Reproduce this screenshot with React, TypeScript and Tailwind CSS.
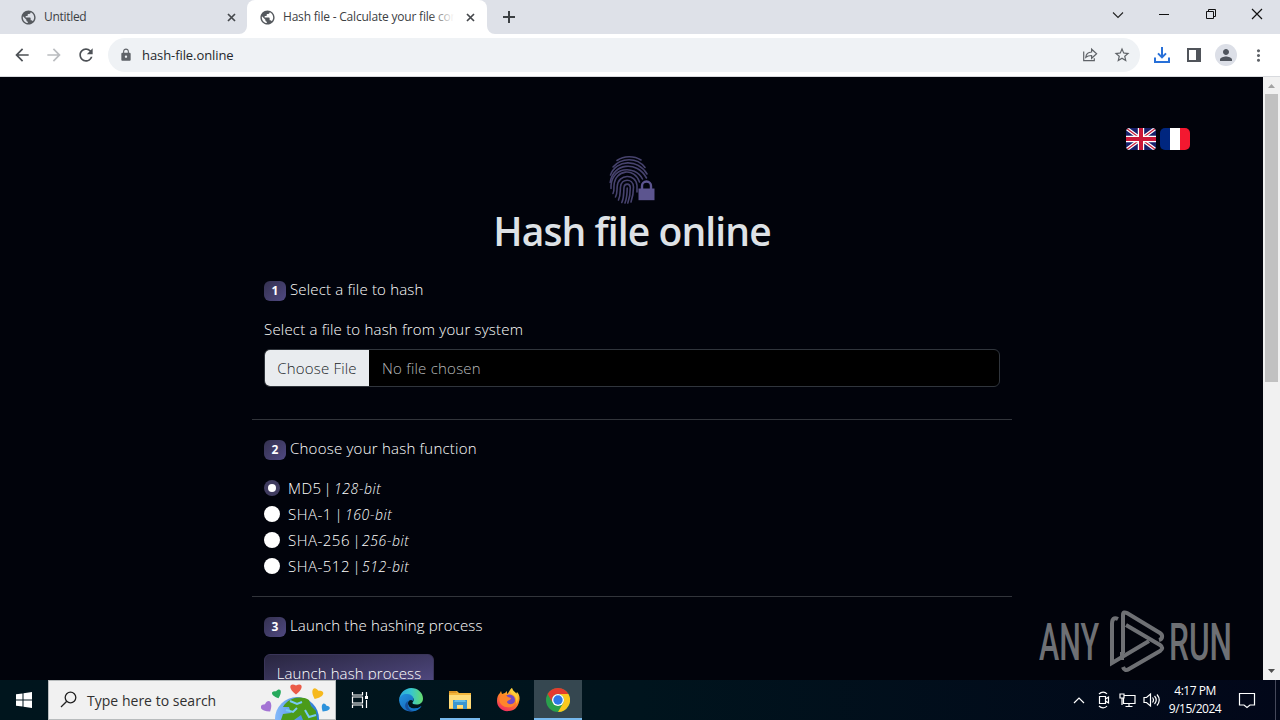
import type { ReactNode } from "react";
import {
  MdArrowBack,
  MdArrowForward,
  MdLock,
  MdMoreVert,
  MdPerson,
  MdPublic,
  MdRefresh,
  MdStarBorder,
} from "react-icons/md";

const HASHES = [
  { name: "MD5", bits: "128-bit", nameCls: "w-[33px]", bar: "w-[13px]" },
  { name: "SHA-1", bits: "160-bit", nameCls: "w-[44px]", bar: "w-[13px]" },
  { name: "SHA-256", bits: "256-bit", nameCls: "w-[63px]", bar: "w-[11px]" },
  { name: "SHA-512", bits: "512-bit", nameCls: "w-[63px]", bar: "w-[11px]" },
];

function TabClose() {
  return (
    <svg width="9" height="9" className="shrink-0">
      <path d="m1 1 7 7M8 1 1 8" stroke="#45484c" strokeWidth="1.7" />
    </svg>
  );
}

function TabStrip() {
  return (
    <div className="flex h-[34px] shrink-0 bg-[#dee1e8] text-[12px] text-[#3c4043]">
      <div className="flex w-[247px] items-center pr-[11px] pl-5">
        <MdPublic size={17} className="text-[#55595e]" />
        <span className="ml-[7px] flex-1 tracking-[-0.3px]">Untitled</span>
        <TabClose />
      </div>
      <div className="relative flex w-60 items-center rounded-t-lg bg-white pl-3">
        <svg className="absolute bottom-0 -left-2" width="8" height="8"><path d="M8 0v8H0a8 8 0 0 0 8-8" fill="#fff" /></svg>
        <svg className="absolute -right-2 bottom-0" width="8" height="8"><path d="M0 0v8h8a8 8 0 0 1-8-8" fill="#fff" /></svg>
        <MdPublic size={17} className="shrink-0 text-[#55595e]" />
        <div className="relative mr-[12px] ml-[7px] w-[171px] overflow-hidden whitespace-nowrap tracking-[-0.2px]">
          Hash file - Calculate your file con
          <div className="absolute inset-y-0 right-0 w-6 bg-gradient-to-r from-transparent to-white" />
        </div>
        <TabClose />
      </div>
      <div className="flex flex-1 items-center pl-[15px]">
        <svg width="14" height="14"><path d="M7 1v12M1 7h12" stroke="#3c4043" strokeWidth="2" /></svg>
      </div>
      <div className="flex items-center pr-[17px]">
        <svg width="12" height="12" className="mr-[35px] mb-[5px]"><path d="m1 3.500 5 5 5-5" fill="none" stroke="#222" strokeWidth="1.100" /></svg>
        <svg width="11" height="12" className="mr-[35px] mb-[6px]"><path d="M0 6.500h10" stroke="#111" /></svg>
        <svg width="12" height="12" className="mr-[34px] mb-[6px]">
          <path d="M1.500 3.500h7v7h-7zM3.500 3.500v-2h7v7h-2" fill="none" stroke="#111" />
        </svg>
        <svg width="12" height="12" className="mb-[6px]"><path d="m1 1 10 10M11 1 1 11" stroke="#111" strokeWidth="1.200" /></svg>
      </div>
    </div>
  );
}

function Toolbar() {
  return (
    <div className="flex h-[43px] shrink-0 items-center border-b border-[#d8dade] bg-white text-[#5f6368]">
      <MdArrowBack size={20} className="ml-3 text-[#4d5156]" />
      <MdArrowForward size={20} className="ml-3 text-[#bbbdc0]" />
      <MdRefresh size={20} className="ml-3 text-[#4d5156]" />
      <div className="ml-3 flex h-[34px] w-[1032px] items-center rounded-full bg-[#eff2f5] pr-[9px] pl-[11px]">
        <MdLock size={14} />
        <span className="mt-px ml-[9px] flex-1 text-[13px] tracking-[-0.08px] text-[#25282c]">hash-file.online</span>
        <svg width="16" height="16" fill="none" stroke="currentColor" strokeWidth="1.200" className="mr-[15px]">
          <path d="M1.700 4.500v9.200h10.600v-2.500M3.800 10.200c.4-3.600 2.500-5 5.800-5.200V2.200l5 4.600-5 4.500V8.500c-2.500 0-4.300.4-5.800 1.700Z" />
        </svg>
        <MdStarBorder size={18} />
      </div>
      <svg width="18" height="18" className="ml-[13px]" fill="none" stroke="#2870d8" strokeWidth="2">
        <path d="M9 1v10M5 7.400 9 11.400 13 7.400M2 11.500V16h14v-4.500" />
      </svg>
      <svg width="14" height="14" className="ml-4"><path d="M1 1h12v12H1z" fill="none" stroke="#50545a" strokeWidth="2" /><path d="M9 1h4v12H9z" fill="#50545a" /></svg>
      <div className="ml-[14px] flex size-[22px] items-center justify-center rounded-full bg-[#dcdfe7]">
        <MdPerson size={18} className="text-[#50555e]" />
      </div>
      <MdMoreVert size={19} className="ml-[12px]" />
    </div>
  );
}

function Fingerprint() {
  return (
    <svg width="48" height="52" className="mx-auto mt-1" fill="none" stroke="#47436e" strokeWidth="1.600" strokeLinecap="round">
      <path d="M9 6.500C16 1.500 26 1.500 33 6" />
      <path d="M5 13C13 3.500 29 3 37 13.500" />
      <path d="M2.500 21C8 5.500 30 4.500 39 20" />
      <path d="M2.200 28.500C5 9 29 6.500 38.500 24" />
      <path d="M3 34.500C2 12.500 27 10.500 34.500 25" />
      <path d="M5 39.500c1.500-3 .7-5 1-8C7 15 27 13.500 31.500 28" />
      <path d="M7.500 43c2-4 1.300-7 1.700-10.500C10 19.500 28 19 29 31.500v6.500" />
      <path d="M10.500 46c2.300-5 1.500-9 2-13 .8-9 12.500-9 13 0 0 6-.8 10-2.500 15" />
      <path d="M13.800 48.500c2.500-5.500 1.700-10 2.200-15 .4-4.500 6-4.500 6.300 0 .1 6-.8 11-2.500 15.500" />
      <path d="M19.200 34c0 5-.4 10-2.200 15" />
      <path d="M34 35v-3a4.500 4.500 0 0 1 9 0v3" stroke="#5c558f" strokeWidth="2.400" />
      <path d="M30.500 34.500h16v11.700h-16z" fill="#5c558f" stroke="none" />
    </svg>
  );
}

function Flags() {
  return (
    <div className="flex justify-end gap-1 pt-[51px] pr-[73px]">
      <svg width="30" height="22" viewBox="0 0 30 22" className="rounded-[4px]">
        <path d="M0 0h30v22H0z" fill="#17206b" />
        <path d="m0 0 30 22M30 0 0 22" stroke="#fff" strokeWidth="3.600" />
        <path d="m0 0 30 22M30 0 0 22" stroke="#c91f3c" strokeWidth="1.300" />
        <path d="M15 0v22M0 11h30" stroke="#fff" strokeWidth="6.400" />
        <path d="M15 0v22M0 11h30" stroke="#cb1838" strokeWidth="4" />
      </svg>
      <svg width="30" height="22" className="rounded-[5px]">
        <path d="M0 0h10v22H0z" fill="#00267f" />
        <path d="M10 0h10v22H10z" fill="#fff" />
        <path d="M20 0h10v22H20z" fill="#f31830" />
      </svg>
    </div>
  );
}

function Step({ n, children }: { n: number; children: ReactNode }) {
  return (
    <div className="flex h-6 items-center">
      <span className="mt-[2px] flex h-5 w-[22px] items-center justify-center rounded-md bg-gradient-to-br from-[#343150] to-[#504982] text-[12px] font-bold text-white">
        {n}
      </span>
      <span className="mb-[2px] ml-1">{children}</span>
    </div>
  );
}

function Page() {
  return (
    <main className="h-full flex-1 overflow-hidden bg-[#01030b] text-[#dee2e6]">
      <Flags />
      <Fingerprint />
      <h1 className="mt-px pl-px text-center text-[39px] leading-[48px] font-semibold tracking-[-0.9px]">Hash file online</h1>
      <div className="mt-[23px] ml-[252px] w-[760px] text-[15px] leading-6 font-light whitespace-nowrap text-white">
        <section className="border-b border-[#32353b] px-3 pb-8">
          <Step n={1}><span className="tracking-[0.18px]">Select a file to hash</span></Step>
          <p className="-mt-px pt-4 tracking-[0.2px]">Select a file to hash from your system</p>
          <div className="mt-[8px] flex h-[38px] items-center overflow-hidden rounded-md border border-[#30353c] bg-black">
            <span className="flex h-full w-[104px] items-center justify-center bg-[#e9ecef] tracking-[0.2px] text-[#212529]">Choose File</span>
            <span className="pl-[13px] tracking-[0.22px] text-[#b8babc]">No file chosen</span>
          </div>
        </section>
        <section className="mt-[17px] border-b border-[#32353b] px-3 pb-[18px]">
          <Step n={2}><span className="tracking-[0.23px]">Choose your hash function</span></Step>
          <div className="mt-[15px] flex flex-col gap-[2px]">
            {HASHES.map((h, i) => (
              <label key={h.name} className="flex h-6 items-center">
                <span className={`mr-2 flex size-4 items-center justify-center rounded-full ${i === 0 ? "bg-[#403c60]" : "bg-white"}`}>
                  {i === 0 && <span className="size-2 rounded-full bg-white" />}
                </span>
                <span className={`tracking-[0.5px] ${h.nameCls}`}>{h.name}</span>
                <span className={`text-center ${h.bar}`}>|</span>
                <em className="pt-[2px] text-[14px] tracking-[0.6px]">{h.bits}</em>
              </label>
            ))}
          </div>
        </section>
        <section className="mt-[17px] px-3">
          <Step n={3}><span className="tracking-[0.15px]">Launch the hashing process</span></Step>
          <button className="mt-4 h-[38px] w-[170px] rounded-md border border-[#3a3559] bg-gradient-to-br from-[#292640] to-[#554d89] tracking-[0.1px]">
            Launch hash process
          </button>
        </section>
      </div>
    </main>
  );
}

function Scrollbar() {
  return (
    <div className="flex w-[17px] shrink-0 flex-col items-center bg-[#f1f1f1]">
      <svg width="17" height="17"><path d="m5 11 3.500-4 3.500 4z" fill="#a3a3a3" /></svg>
      <div className="h-[288px] w-[13px] bg-[#c1c1c1]" />
      <svg width="17" height="17" className="mt-auto"><path d="m5 6 3.500 4L12 6z" fill="#505050" /></svg>
    </div>
  );
}

function Watermark() {
  return (
    <svg className="absolute top-[605px] left-[1035px]" width="220" height="72" fill="none" stroke="#74767a" strokeWidth="4" opacity="0.95">
      <g fill="#74767a" stroke="none" fontFamily="Roboto, sans-serif" fontSize="52" fontWeight="500">
        <text x="4" y="55" textLength="60" lengthAdjust="spacingAndGlyphs">ANY</text>
        <text x="134" y="55" textLength="63" lengthAdjust="spacingAndGlyphs">RUN</text>
      </g>
      <path d="M83 14c-4-2-6 0-6 5v39l37-22" />
      <path d="M88 48V10c0-3 2-3 4-2l33 20c3 2 3 6-1 7" />
      <path d="m91 20 34 20c3 2 3 4 0 6L94 64c-3 2-5 1-6-2" />
      <path d="M87 55v-8" />
    </svg>
  );
}

function SearchArt() {
  const heart = "M0 5.500C-9-1-6-7 0-3.500 6-7 9-1 0 5.500Z";
  return (
    <svg width="70" height="39" className="mr-1 ml-auto shrink-0">
      <defs>
        <linearGradient id="sea"><stop stopColor="#85b9fa" /><stop offset="1" stopColor="#2779d5" /></linearGradient>
      </defs>
      <circle cx="36" cy="38" r="22" fill="url(#sea)" />
      <path d="M22 26c5-9 17-12 26-7l2 6 5 5 1 9H42l-2-5-7 5H20l2-6 8-1-2-6Z" fill="#4b9b19" />
      <path d="m29 20 7 3 5-2M25 29l7 2 4-4M44 29l4 7 7-2" stroke="#78caf5" strokeWidth="2" fill="none" />
      <path d={heart} transform="translate(35 8)" fill="#eb5b47" />
      <path d={heart} transform="translate(16 13) rotate(-20) scale(.8)" fill="#26a95b" />
      <path d={heart} transform="translate(56 13) rotate(25)" fill="#f6b91e" />
      <path d={heart} transform="translate(6 26) rotate(-35)" fill="#a474d4" />
      <path d={heart} transform="translate(64 27) rotate(35) scale(.75)" fill="#2c92dc" />
    </svg>
  );
}

function EdgeIcon() {
  return (
    <svg width="24" height="24" viewBox="0 0 24 24">
      <defs>
        <linearGradient id="edgeTop" x1="0" x2="1"><stop stopColor="#2aa8de" /><stop offset=".5" stopColor="#37c6d0" /><stop offset="1" stopColor="#66dc6c" /></linearGradient>
        <linearGradient id="edgeSide" x1="0" y1="0" x2="1" y2="1"><stop stopColor="#2394e0" /><stop offset="1" stopColor="#1057ad" /></linearGradient>
      </defs>
      <path d="M0 11.500C1 5 6 0 12.200 0 19 0 24 5 24 10.500c0 4-3 6-6.500 6-3 0-4.500-1-4-2 2-2 1.500-4.500-1-6C8 6 2 7 0 11.500Z" fill="url(#edgeTop)" />
      <path d="M0 12c1-5 5-6.500 8.500-6 5 .5 7 4 5.500 7-2-2-5-.5-5 2.500 0 5 8 7 13.500 2.500-5 8-21 8-22.500-6Z" fill="url(#edgeSide)" />
      <path d="M9 13c-1 4 1 8 7 10-9 2.500-13-6-7-10Z" fill="#174e9a" />
      <path d="M9 15.500c0 5 8 7 13.500 2.500-3 5-8 6-11 4-2-1.500-3-4-2.500-6.500Z" fill="#1476c7" />
    </svg>
  );
}

function FolderIcon() {
  return (
    <svg width="22" height="20" viewBox="0 0 22 20">
      <path d="M0 1h8l2 2h12v16H0z" fill="#f3b63c" />
      <path d="M0 5h22v13H0z" fill="#ffdc7a" />
      <path d="M0 1h7l1 2H0z" fill="#dd9524" />
      <path d="M4 10h14v9h-4v-4H8v4H4z" fill="#3b96d0" />
      <path d="M6 10h10l1 2H5z" fill="#63bce8" />
    </svg>
  );
}

function FirefoxIcon() {
  return (
    <svg width="24" height="24" viewBox="0 0 24 24">
      <defs>
        <linearGradient id="fox" x1=".8" y1="0" x2=".3" y2="1"><stop stopColor="#ffe345" /><stop offset=".45" stopColor="#ff8b20" /><stop offset="1" stopColor="#f12b62" /></linearGradient>
      </defs>
      <path d="M4 3 5 6l3-1 2-2v3c2-1 2-4 5-6 0 3 3 4 4 6l1-2c3 3 3 7 2 10-1 5-5 9-10 9C5 24 0 19 0 13c0-4 1-6 3-8Z" fill="url(#fox)" />
      <circle cx="12.500" cy="12" r="5.500" fill="#7249c6" />
      <path d="M3 9c3-3 6-2 8 0l3 1c0 2-3 2-4 4 1 3 5 3 8 0-1 5-5 6-9 5-5-1-8-6-6-10Z" fill="#ff852b" />
      <path d="M15 6c4 2 5 6 4 10 3-4 2-9-1-12-1-1-2-1-3-4-2 2-2 4 0 6Z" fill="#ffce38" />
    </svg>
  );
}

function ChromeIcon() {
  return (
    <svg width="24" height="24" viewBox="0 0 24 24">
      <circle cx="12" cy="12" r="12" fill="#2aa04c" />
      <path d="M1.600 6A12 12 0 0 1 22.400 6H12a6 6 0 0 0-5.200 9Z" fill="#e33b2e" />
      <path d="M22.400 6A12 12 0 0 1 12 24l5.200-9A6 6 0 0 0 12 6Z" fill="#fcc81f" />
      <circle cx="12" cy="12" r="6" fill="#fff" />
      <circle cx="12" cy="12" r="4.700" fill="#2c78e7" />
    </svg>
  );
}

function TaskbarItem({ open, active, children }: { open?: boolean; active?: boolean; children: ReactNode }) {
  return (
    <div className={`relative flex h-10 w-12 items-center justify-center ${active ? "bg-[#354750]" : ""}`}>
      {children}
      {open && <span className={`absolute bottom-0 h-[2px] bg-[#76b9ed] ${active ? "w-12" : "w-10"}`} />}
    </div>
  );
}

function Taskbar() {
  return (
    <footer className="flex h-10 shrink-0 items-center bg-gradient-to-r from-[#00151d] via-[#00141d] to-[#020719] text-white">
      <div className="flex w-12 justify-center">
        <svg width="16" height="16" fill="#fff"><path d="M0 2.300 6.500 1.400v6.100H0zM7.500 1.200 16 0v7.500H7.500zM0 8.500h6.500v6.100L0 13.700zM7.500 8.500H16V16l-8.500-1.200z" /></svg>
      </div>
      <div className="flex h-10 w-72 items-center border border-[#b8bcbd] bg-[#f1f1f1] text-[#303030]">
        <svg width="17" height="18" className="ml-[11px] shrink-0" fill="none" stroke="#222" strokeWidth="1.300"><circle cx="10.500" cy="6.500" r="5.300" /><path d="M6.800 10.300 1 16" /></svg>
        <span className="mt-px ml-[10px] text-[14px] tracking-[0.02px] whitespace-nowrap">Type here to search</span>
        <SearchArt />
      </div>
      <TaskbarItem>
        <svg width="18" height="18" fill="none" stroke="#fff" strokeWidth="1.200">
          <path d="M1.500 1v3h10V1M1.500 17v-3h10v3M1.500 6v6h10V6zM15.500 1v4M15.500 9v8" />
          <path d="M14 5h3v3h-3z" fill="#fff" stroke="none" />
        </svg>
      </TaskbarItem>
      <div className="ml-[3px] flex gap-px">
        <TaskbarItem><EdgeIcon /></TaskbarItem>
        <TaskbarItem open><FolderIcon /></TaskbarItem>
        <TaskbarItem><FirefoxIcon /></TaskbarItem>
        <TaskbarItem open active><ChromeIcon /></TaskbarItem>
      </div>
      <div className="ml-auto flex h-full items-center">
        <svg width="12" height="8" className="mr-[12px]" fill="none" stroke="#fff" strokeWidth="1.200"><path d="m1 7 5-5 5 5" /></svg>
        <svg width="14" height="18" className="mr-[8px]" fill="none" stroke="#fff" strokeWidth="1.200">
          <path d="M2.500 5.500h6v7h-6zM8.500 8l3-2v6l-3-2M2 3c2.500-2.500 6-2.500 8 0M2 15c2.500 2.500 6 2.500 8 0" />
        </svg>
        <svg width="17" height="16" className="mr-[7px]" fill="none" stroke="#fff" strokeWidth="1.200">
          <path d="M5 3.500h11v8H4.500V6M1 2h4v4H1zM3 6v7M10 12v2.500M6.500 14.500h7" />
        </svg>
        <svg width="18" height="16" className="mr-[7px]" fill="none" stroke="#fff" strokeWidth="1.200">
          <path d="M1 5.500h2.500l4-3.500v12l-4-3.500H1zM9.500 5.500q2 2.500 0 5M11.500 4q3.500 4 0 8M14 2.500q4.500 5.500 0 11" />
        </svg>
        <div className="w-[54px] text-center text-[12px] leading-[18px] tracking-[-0.5px] whitespace-nowrap">
          <div>4:17 PM</div>
          <div>9/15/2024</div>
        </div>
        <svg width="18" height="18" className="mr-[19px] ml-[16px]" fill="none" stroke="#fff" strokeWidth="1.200"><path d="M1.500 2.500h15v11.500H12l-3 2.500-3-2.500H1.500z" /></svg>
        <span className="mr-1 h-full w-px bg-[#45485a]" />
      </div>
    </footer>
  );
}

export default function App() {
  return (
    <div className="relative flex h-[720px] w-[1280px] flex-col overflow-hidden font-['Open_Sans','Noto_Sans',sans-serif]">
      <TabStrip />
      <Toolbar />
      <div className="flex h-[603px] shrink-0">
        <Page />
        <Scrollbar />
      </div>
      <Taskbar />
      <Watermark />
    </div>
  );
}
